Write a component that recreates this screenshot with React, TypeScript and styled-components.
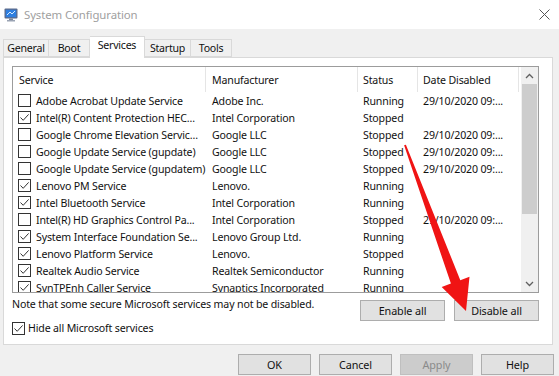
import styled, { createGlobalStyle } from 'styled-components';

const GlobalStyle = createGlobalStyle`
  html, body {
    margin: 0;
    padding: 0;
    background: #f0f0f0;
  }
  body {
    font-family: 'Noto Sans', 'Open Sans', sans-serif;
  }
`;

const UI_FONT = `'Noto Sans', 'Open Sans', 'Liberation Sans', sans-serif`;

const Window = styled.div`
  position: relative;
  width: 559px;
  height: 376px;
  overflow: hidden;
  background: #f0f0f0;
  font-family: ${UI_FONT};
  font-size: 10.6px;
  letter-spacing: -0.15px;
  color: #111;
`;

const TitleBar = styled.div`
  height: 29px;
  background: #fff;
  display: flex;
  align-items: center;
  padding: 0 9px 0 4px;
  box-sizing: border-box;
`;

const Title = styled.span`
  flex: 1;
  margin-left: 6px;
  font-size: 11.4px;
  letter-spacing: -0.1px;
  color: #a0a0a0;
`;

const TabStrip = styled.div`
  display: flex;
  align-items: flex-end;
  height: 28px;
  padding-left: 3px;
`;

const Tab = styled.div<{ active?: boolean; w: number }>`
  position: relative;
  z-index: ${({ active }) => (active ? 1 : 0)};
  box-sizing: border-box;
  width: ${({ w }) => w}px;
  height: ${({ active }) => (active ? '22px' : '18px')};
  margin-bottom: ${({ active }) => (active ? '-1px' : '0')};
  padding-top: ${({ active }) => (active ? '1px' : '0')};
  display: flex;
  justify-content: center;
  align-items: ${({ active }) => (active ? 'flex-start' : 'center')};
  letter-spacing: -0.25px;
  background: ${({ active }) => (active ? '#fff' : '#f0f0f0')};
  border: 1px solid #d9d9d9;
  border-bottom: ${({ active }) => (active ? 'none' : '1px solid #d9d9d9')};
  & + & {
    border-left: none;
  }
`;

const Panel = styled.div`
  box-sizing: border-box;
  margin: 0 6px 0 3px;
  height: 288px;
  background: #fff;
  border: 1px solid #d9d9d9;
  padding: 8px 13px 0 8px;
`;

const ListBox = styled.div`
  box-sizing: border-box;
  height: 227px;
  border: 1px solid #9c9c9c;
  display: flex;
  overflow: hidden;
`;

const ListContent = styled.div`
  flex: 1;
  overflow: hidden;
`;

const COLUMNS = '193px 152px 60px 101px';

const HeaderRow = styled.div`
  display: grid;
  grid-template-columns: ${COLUMNS};
  height: 25px;
`;

const HeaderCell = styled.div<{ pad?: number }>`
  display: flex;
  align-items: center;
  padding-left: ${({ pad }) => pad ?? 6}px;
  border-right: 1px solid #e5e5e5;
  white-space: nowrap;
`;

const Row = styled.div`
  display: grid;
  grid-template-columns: ${COLUMNS};
  height: 17px;
  align-items: center;
  white-space: nowrap;
`;

const Cell = styled.div<{ pad?: number }>`
  padding-left: ${({ pad }) => pad ?? 6}px;
  overflow: hidden;
  display: flex;
  align-items: center;
  gap: 5px;
`;

const Box = styled.span`
  box-sizing: border-box;
  flex: none;
  width: 13px;
  height: 13px;
  border: 1px solid #333;
  background: #fff;
  display: inline-flex;
  align-items: center;
  justify-content: center;
`;

const ScrollBar = styled.div`
  width: 17px;
  margin-left: 2px;
  background: #f0f0f0;
  display: flex;
  flex-direction: column;
  align-items: center;
`;

const ScrollArrow = styled.div`
  height: 17px;
  width: 17px;
  display: flex;
  align-items: center;
  justify-content: center;
`;

const ScrollTrack = styled.div`
  flex: 1;
  width: 15px;
`;

const Thumb = styled.div`
  height: 130px;
  background: #cdcdcd;
`;

const Footer = styled.div`
  display: flex;
  justify-content: space-between;
  align-items: flex-start;
  margin-top: 4px;
`;

const FooterLeft = styled.div`
  display: flex;
  flex-direction: column;
  gap: 10px;
`;

const Note = styled.div`
  line-height: 14px;
`;

const CheckLine = styled.label`
  display: flex;
  align-items: center;
  gap: 3px;
  line-height: 14px;
`;

const ButtonGroup = styled.div`
  display: flex;
  gap: 9px;
  margin-top: 3px;
`;

const Button = styled.button<{ disabled?: boolean; w?: number }>`
  box-sizing: border-box;
  width: ${({ w }) => w ?? 73}px;
  height: 21px;
  padding: 0;
  font-family: ${UI_FONT};
  font-size: 10.8px;
  letter-spacing: -0.1px;
  color: ${({ disabled }) => (disabled ? '#8a8a8a' : '#111')};
  background: ${({ disabled }) => (disabled ? '#cccccc' : '#e1e1e1')};
  border: 1px solid ${({ disabled }) => (disabled ? '#bfbfbf' : '#adadad')};
`;

const DialogButtons = styled.div`
  display: flex;
  justify-content: flex-end;
  gap: 8px;
  padding: 9px 5px 0 0;
`;

const ArrowOverlay = styled.svg`
  position: absolute;
  left: 0;
  top: 0;
  pointer-events: none;
`;

type Service = {
  checked: boolean;
  name: string;
  maker: string;
  status: string;
  date: string;
};

const DATE = '29/10/2020 09:...';

const services: Service[] = [
  { checked: false, name: 'Adobe Acrobat Update Service', maker: 'Adobe Inc.', status: 'Running', date: DATE },
  { checked: true, name: 'Intel(R) Content Protection HEC...', maker: 'Intel Corporation', status: 'Stopped', date: '' },
  { checked: false, name: 'Google Chrome Elevation Servic...', maker: 'Google LLC', status: 'Stopped', date: DATE },
  { checked: false, name: 'Google Update Service (gupdate)', maker: 'Google LLC', status: 'Stopped', date: DATE },
  { checked: false, name: 'Google Update Service (gupdatem)', maker: 'Google LLC', status: 'Stopped', date: DATE },
  { checked: true, name: 'Lenovo PM Service', maker: 'Lenovo.', status: 'Running', date: '' },
  { checked: true, name: 'Intel Bluetooth Service', maker: 'Intel Corporation', status: 'Running', date: '' },
  { checked: false, name: 'Intel(R) HD Graphics Control Pa...', maker: 'Intel Corporation', status: 'Stopped', date: DATE },
  { checked: true, name: 'System Interface Foundation Se...', maker: 'Lenovo Group Ltd.', status: 'Running', date: '' },
  { checked: true, name: 'Lenovo Platform Service', maker: 'Lenovo.', status: 'Stopped', date: '' },
  { checked: true, name: 'Realtek Audio Service', maker: 'Realtek Semiconductor', status: 'Running', date: '' },
  { checked: true, name: 'SynTPEnh Caller Service', maker: 'Synaptics Incorporated', status: 'Running', date: '' },
];

const tabs = [
  { label: 'General', w: 46 },
  { label: 'Boot', w: 41 },
  { label: 'Services', w: 55, active: true },
  { label: 'Startup', w: 46 },
  { label: 'Tools', w: 41 },
];

const CheckBox = ({ checked }: { checked: boolean }) => (
  <Box>
    {checked && (
      <svg width="11" height="11" viewBox="0 0 11 11">
        <path d="M1.5 5.5 L4.2 8.3 L9.6 2.4" fill="none" stroke="#333" strokeWidth="1" />
      </svg>
    )}
  </Box>
);

const AppIcon = () => (
  <svg width="14" height="14" viewBox="0 0 14 14">
    <rect x="0.5" y="0.5" width="13" height="10" rx="1" fill="#5a6b8c" />
    <rect x="1.8" y="1.8" width="10.4" height="7.4" fill="#2f7fe0" />
    <path d="M3 7 L6 4 L8 6 L11 3" fill="none" stroke="#d6ecff" strokeWidth="1" />
    <rect x="5" y="10.5" width="4" height="1.5" fill="#7b8699" />
    <rect x="3" y="12" width="8" height="1.5" fill="#9aa3b3" />
  </svg>
);

const CloseIcon = () => (
  <svg width="11" height="11" viewBox="0 0 11 11">
    <path d="M0.5 0.5 L10.5 10.5 M10.5 0.5 L0.5 10.5" stroke="#555" strokeWidth="1" />
  </svg>
);

const Chevron = ({ up }: { up?: boolean }) => (
  <svg width="9" height="6" viewBox="0 0 9 6">
    <path
      d={up ? 'M1 5 L4.5 1.5 L8 5' : 'M1 1 L4.5 4.5 L8 1'}
      fill="none"
      stroke="#606060"
      strokeWidth="1.3"
    />
  </svg>
);

const App = () => {
  return (
    <>
      <GlobalStyle />
      <Window>
        {/* title bar */}
        <TitleBar>
          <AppIcon />
          <Title>System Configuration</Title>
          <CloseIcon />
        </TitleBar>

        {/* tabs */}
        <TabStrip>
          {tabs.map((t) => (
            <Tab key={t.label} w={t.w} active={t.active}>
              {t.label}
            </Tab>
          ))}
        </TabStrip>

        <Panel>
          <ListBox>
            <ListContent>
              <HeaderRow>
                <HeaderCell>Service</HeaderCell>
                <HeaderCell>Manufacturer</HeaderCell>
                <HeaderCell pad={5}>Status</HeaderCell>
                <HeaderCell pad={5}>Date Disabled</HeaderCell>
              </HeaderRow>
              {services.map((s) => (
                <Row key={s.name}>
                  <Cell pad={5}>
                    <CheckBox checked={s.checked} />
                    {s.name}
                  </Cell>
                  <Cell>{s.maker}</Cell>
                  <Cell pad={5}>{s.status}</Cell>
                  <Cell pad={5}>{s.date}</Cell>
                </Row>
              ))}
            </ListContent>
            <ScrollBar>
              <ScrollArrow>
                <Chevron up />
              </ScrollArrow>
              <ScrollTrack>
                <Thumb />
              </ScrollTrack>
              <ScrollArrow>
                <Chevron />
              </ScrollArrow>
            </ScrollBar>
          </ListBox>

          <Footer>
            <FooterLeft>
              <Note>Note that some secure Microsoft services may not be disabled.</Note>
              <CheckLine>
                <CheckBox checked />
                Hide all Microsoft services
              </CheckLine>
            </FooterLeft>
            <ButtonGroup>
              <Button w={85}>Enable all</Button>
              <Button w={85}>Disable all</Button>
            </ButtonGroup>
          </Footer>
        </Panel>

        <DialogButtons>
          <Button>OK</Button>
          <Button>Cancel</Button>
          <Button disabled>Apply</Button>
          <Button>Help</Button>
        </DialogButtons>

        {/* red pointer arrow drawn over the dialog */}
        <ArrowOverlay width="559" height="376" viewBox="0 0 559 376">
          <polygon
            points="404.1,145.3 405.9,144.7 460.3,280.2 469.5,276.8 466,311 441.7,287 450.9,283.6"
            fill="#f01414"
          />
        </ArrowOverlay>
      </Window>
    </>
  );
};

export default App;
